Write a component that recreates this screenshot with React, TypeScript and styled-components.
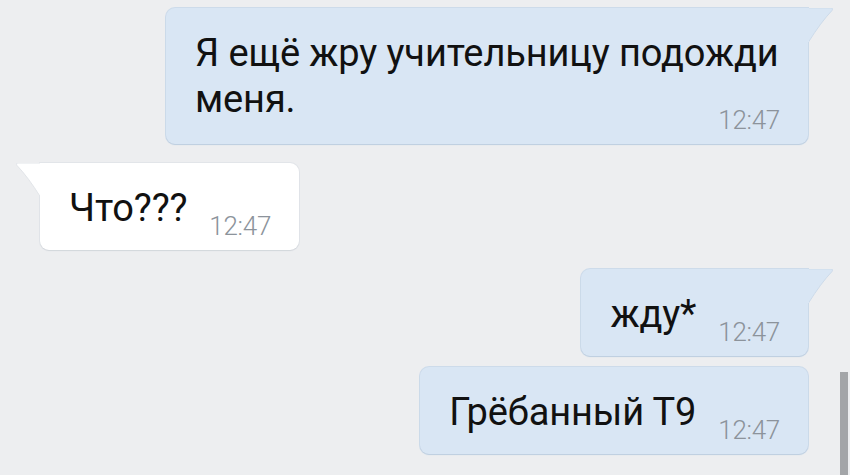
import React from 'react';
import styled, { createGlobalStyle } from 'styled-components';

const GlobalStyle = createGlobalStyle`
  html, body {
    margin: 0;
    padding: 0;
    background: #edeef0;
  }
  body {
    font-family: Roboto, "Noto Sans", sans-serif;
    overflow: hidden;
  }
`;

const Screen = styled.div`
  position: relative;
  width: 850px;
  height: 475px;
  overflow: hidden;
  background: #edeef0;
`;

const Feed = styled.div`
  display: flex;
  flex-direction: column;
  padding: 8px 42px 0 40px;
`;

const Row = styled.div<{ $out?: boolean; $gap: number }>`
  display: flex;
  justify-content: ${(p) => (p.$out ? 'flex-end' : 'flex-start')};
  margin-top: ${(p) => p.$gap}px;
`;

const Bubble = styled.div<{ $out?: boolean; $tail?: boolean; $extra?: number }>`
  position: relative;
  max-width: 642px;
  box-sizing: border-box;
  padding: 22px 28px ${(p) => 19 + (p.$extra || 0)}px 29px;
  border-radius: 9px;
  ${(p) => p.$tail && (p.$out ? 'border-top-right-radius: 0;' : 'border-top-left-radius: 0;')}
  background: ${(p) => (p.$out ? '#d9e6f4' : '#ffffff')};
  box-shadow: 0 1px 1px ${(p) => (p.$out ? '#bfcfe0' : '#d3d7dc')},
    0 0 0 1px ${(p) => (p.$out ? '#cddbea' : '#e2e5e9')};
  font-size: 38px;
  line-height: 46px;
  letter-spacing: -0.12px;
  color: #111111;
`;

const Time = styled.span<{ $drop: number }>`
  float: right;
  position: relative;
  top: ${(p) => p.$drop}px;
  margin-left: 22px;
  font-size: 26px;
  line-height: 26px;
  font-weight: 300;
  color: #8c939b;
  letter-spacing: -0.3px;
`;

const Tail = styled.svg<{ $out?: boolean }>`
  position: absolute;
  top: 0;
  width: 26px;
  height: 34px;
  ${(p) => (p.$out ? 'right: -25px;' : 'left: -24px; transform: scaleX(-1);')}
`;

const Scrollbar = styled.div`
  position: absolute;
  right: 2px;
  top: 372px;
  width: 8px;
  height: 110px;
  background: #a3a5a8;
`;

const BubbleTail: React.FC<{ out?: boolean }> = ({ out }) => (
  <Tail $out={out} viewBox="0 0 26 34">
    <path
      d="M0 0 H25 Q 26 1 25 2.5 Q 14 14 1.5 34 H0 Z"
      fill={out ? '#d9e6f4' : '#ffffff'}
      stroke={out ? '#cddbea' : '#e2e5e9'}
      strokeWidth="1"
    />
    <rect x="0" y="-1" width="2" height="36" fill={out ? '#d9e6f4' : '#ffffff'} />
  </Tail>
);

type Msg = { text: string; out?: boolean; tail?: boolean; gap: number; extra?: number };

const messages: Msg[] = [
  { text: 'Я ещё жру учительницу подожди меня.', out: true, tail: true, gap: 0, extra: 3 },
  { text: 'Что???', tail: true, gap: 19 },
  { text: 'жду*', out: true, tail: true, gap: 19 },
  { text: 'Грёбанный Т9', out: true, gap: 11 },
];

const App: React.FC = () => {
  return (
    <Screen>
      <GlobalStyle />
      <Feed>
        {messages.map((m, i) => (
          <Row key={i} $out={m.out} $gap={m.gap}>
            <Bubble $out={m.out} $tail={m.tail} $extra={m.extra}>
              {m.tail && <BubbleTail out={m.out} />}
              {m.text}
              <Time $drop={28 + (m.extra || 0)}>12:47</Time>
            </Bubble>
          </Row>
        ))}
      </Feed>
      <Scrollbar />
    </Screen>
  );
};

export default App;
